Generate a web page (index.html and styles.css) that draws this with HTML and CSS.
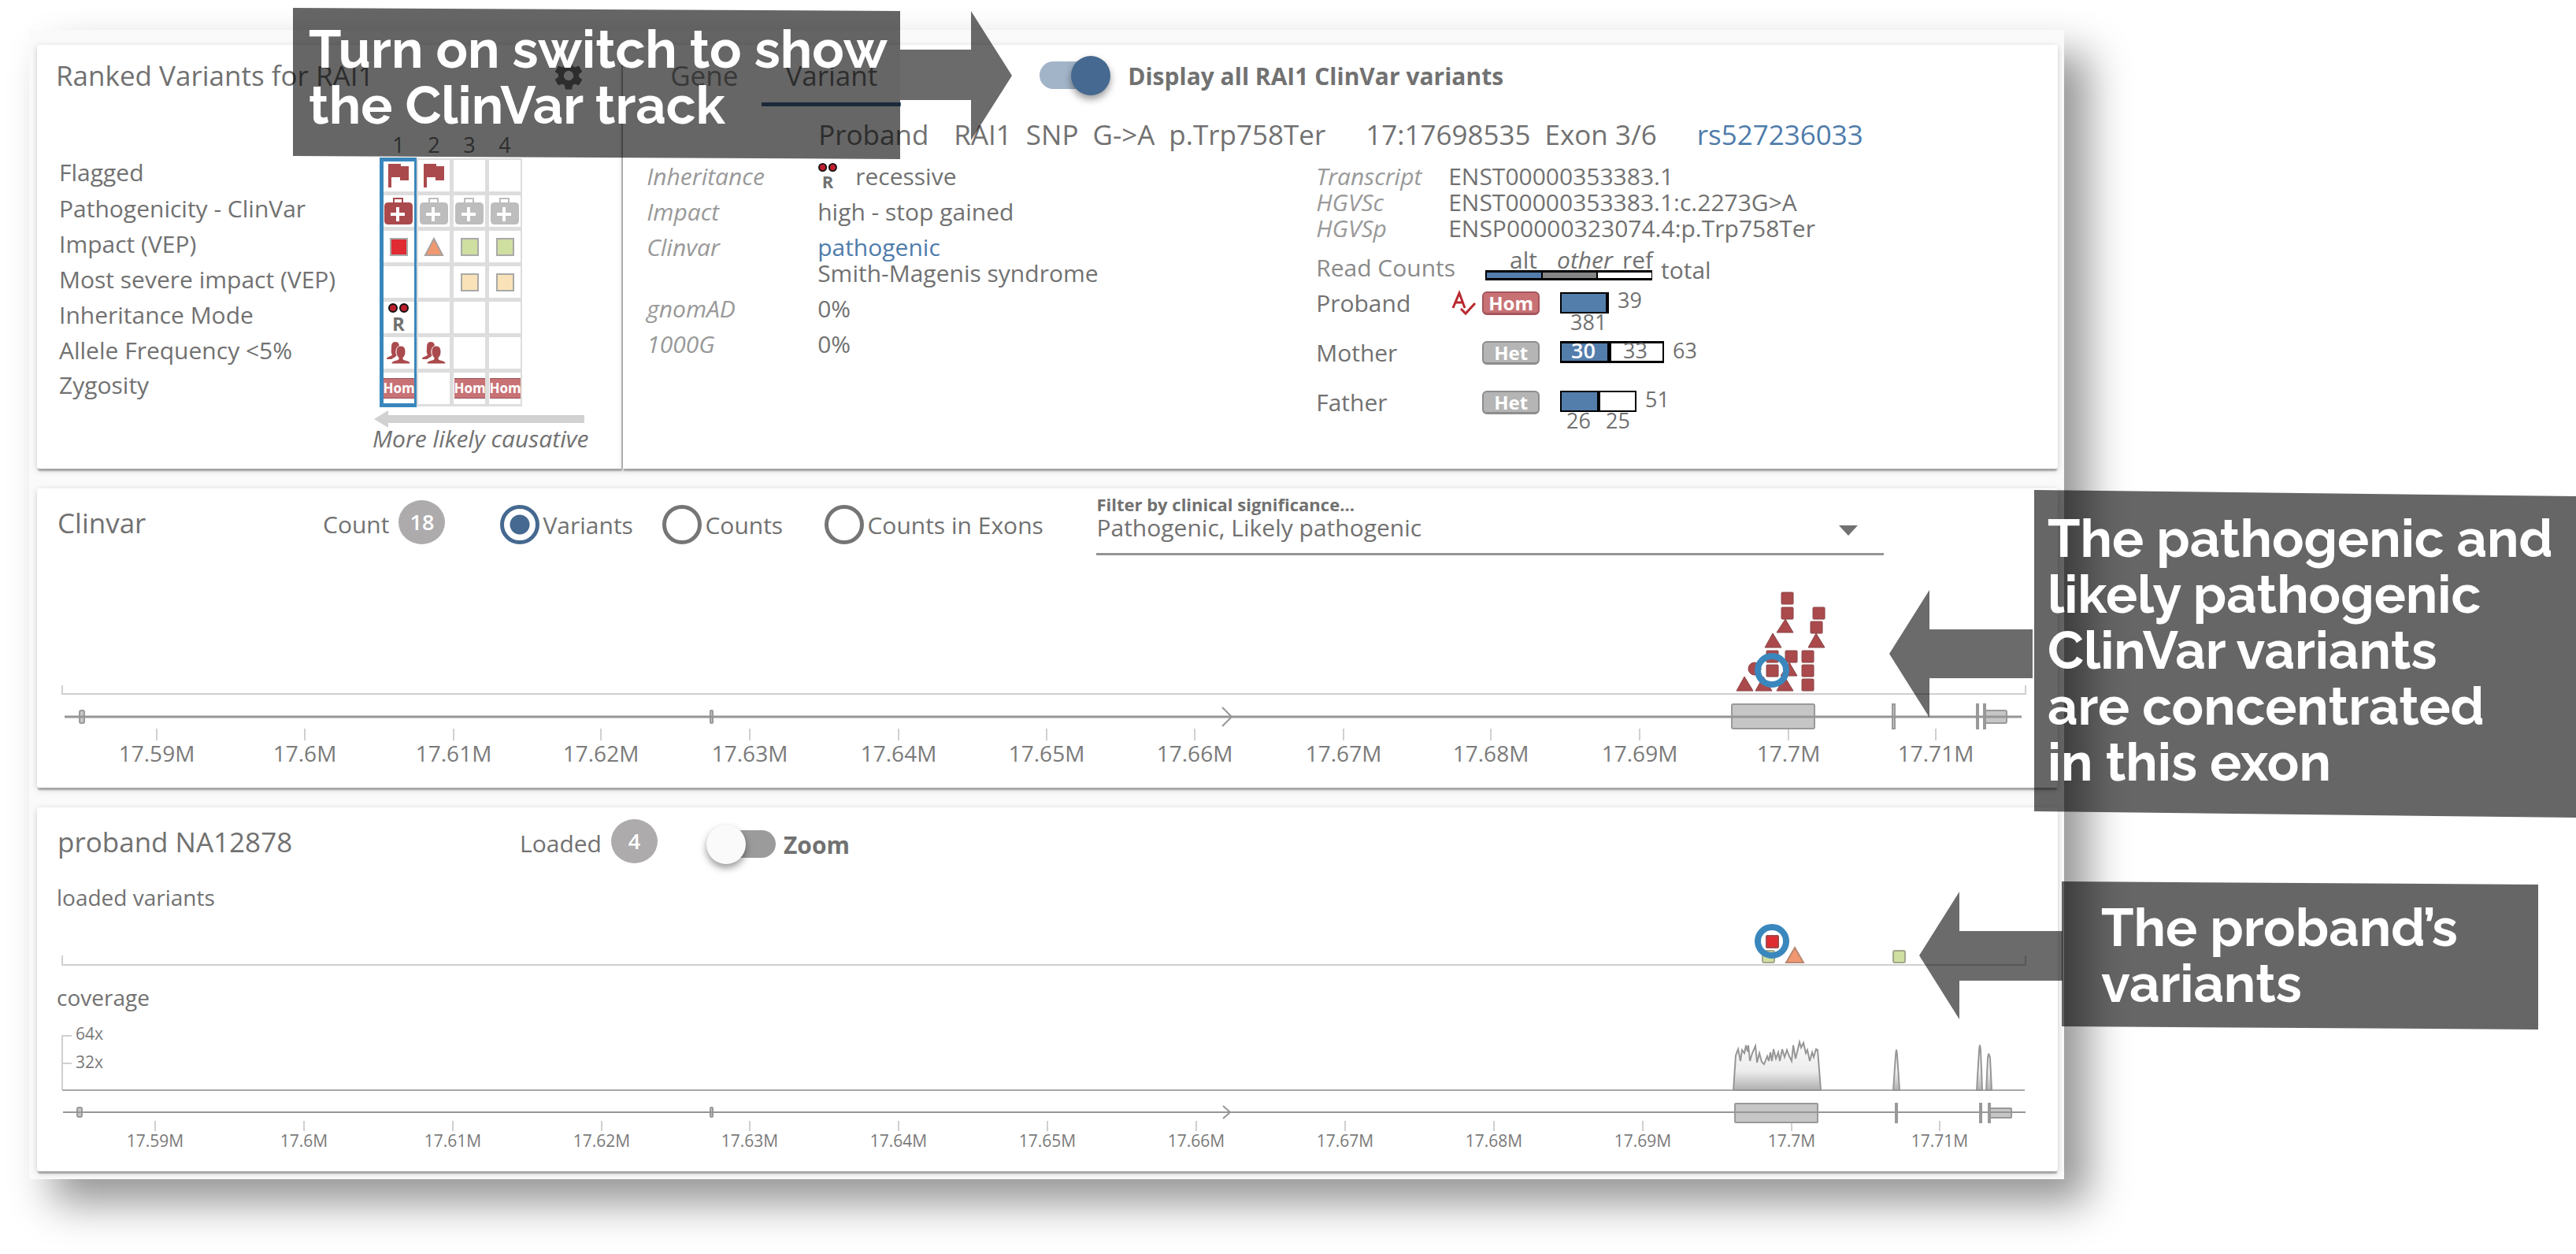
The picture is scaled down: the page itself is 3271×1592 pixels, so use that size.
FILE: index.html
```html
<!DOCTYPE html>
<html lang="en">
<head>
<meta charset="utf-8">
<title>RAI1 variant review</title>
<link rel="stylesheet" href="styles.css">
</head>
<body>
<svg class="defs" aria-hidden="true">
  <defs>
    <symbol id="flag" viewBox="0 0 26 30"><path d="M0 0h16v3h10v18H15v-4H4v13H0z"/></symbol>
    <symbol id="medkit" viewBox="0 0 36 34"><path d="M5 6h26q5 0 5 5v18q0 5-5 5H5q-5 0-5-5V11q0-5 5-5z"/><path d="M12 7V1h11v6" fill="none" stroke="currentColor" stroke-width="2"/><path d="M15 12h4v7h7v4h-7v7h-4v-7H8v-4h7z" fill="#fff"/></symbol>
    <symbol id="people" viewBox="0 0 30 28"><path d="M11 0c4 0 5 3 5 6-5 2-5 8-3 11l-2 2-5 3H0c0-4 6-3 7-6-2-3-1-5-1-9 0-4 1-7 5-7z"/><path d="M18 5c4 0 6 3 6 8 0 3-1 5-3 7v2c2 2 9 1 9 6H6c0-5 7-4 9-6v-2c-2-2-3-4-3-7 0-5 2-8 6-8z" stroke="#fff" stroke-width="1"/></symbol>
    <symbol id="recessive" viewBox="0 0 26 36"><g fill="#be1e2d" stroke="#111" stroke-width="2"><circle cx="6" cy="6" r="5"/><circle cx="20" cy="6" r="5"/></g><text x="13" y="35" text-anchor="middle" class="r-letter">R</text></symbol>
    <linearGradient id="depth" x1="0" y1="0" x2="0" y2="1"><stop offset="0" stop-color="#fafafa"/><stop offset=".6" stop-color="#ededed"/><stop offset="1" stop-color="#b0b0b0"/></linearGradient>
  </defs>
</svg>

<main class="app">
  <div class="top-row">
    <section class="card ranked">
      <header class="ranked-head">
        <h2 class="title">Ranked Variants for RAI1</h2>
        <button class="gear" type="button" aria-label="Settings"><svg viewBox="0 0 24 24"><path d="M19.43 12.98c.04-.32.07-.64.07-.98s-.03-.66-.07-.98l2.11-1.65c.19-.15.24-.42.12-.64l-2-3.46c-.12-.22-.39-.3-.61-.22l-2.49 1c-.52-.4-1.08-.73-1.69-.98l-.38-2.65C14.46 2.18 14.25 2 14 2h-4c-.25 0-.46.18-.49.42l-.38 2.65c-.61.25-1.17.59-1.69.98l-2.49-1c-.23-.09-.49 0-.61.22l-2 3.46c-.13.22-.07.49.12.64l2.11 1.65c-.04.32-.07.65-.07.98s.03.66.07.98l-2.11 1.65c-.19.15-.24.42-.12.64l2 3.46c.12.22.39.3.61.22l2.49-1c.52.4 1.08.73 1.69.98l.38 2.65c.03.24.24.42.49.42h4c.25 0 .46-.18.49-.42l.38-2.65c.61-.25 1.17-.59 1.69-.98l2.49 1c.23.09.49 0 .61-.22l2-3.46c.12-.22.07-.49-.12-.64l-2.11-1.65zM12 15.5c-1.93 0-3.5-1.57-3.5-3.5s1.57-3.500 3.500-3.500 3.500 1.570 3.500 3.500-1.570 3.500-3.500 3.500z"/></svg></button>
      </header>
      <div class="matrix-wrap">
        <table class="matrix">
          <thead><tr><td class="corner"></td><th>1</th><th>2</th><th>3</th><th>4</th></tr></thead>
          <tbody>
            <tr><th>Flagged</th><td><svg class="i-flag"><use href="#flag"/></svg></td><td><svg class="i-flag"><use href="#flag"/></svg></td><td></td><td></td></tr>
            <tr><th>Pathogenicity - ClinVar</th><td><svg class="i-kit"><use href="#medkit"/></svg></td><td><svg class="i-kit muted"><use href="#medkit"/></svg></td><td><svg class="i-kit muted"><use href="#medkit"/></svg></td><td><svg class="i-kit muted"><use href="#medkit"/></svg></td></tr>
            <tr><th>Impact (VEP)</th><td><i class="sq red"></i></td><td><svg class="i-tri" viewBox="0 0 26 24"><path d="M13 2l11 21H2z"/></svg></td><td><i class="sq green"></i></td><td><i class="sq green"></i></td></tr>
            <tr><th>Most severe impact (VEP)</th><td></td><td></td><td><i class="sq sand"></i></td><td><i class="sq sand"></i></td></tr>
            <tr><th>Inheritance Mode</th><td><svg class="i-rec"><use href="#recessive"/></svg></td><td></td><td></td><td></td></tr>
            <tr><th>Allele Frequency &lt;5%</th><td><svg class="i-people"><use href="#people"/></svg></td><td><svg class="i-people"><use href="#people"/></svg></td><td></td><td></td></tr>
            <tr><th>Zygosity</th><td><span class="hom">Hom</span></td><td></td><td><span class="hom">Hom</span></td><td><span class="hom">Hom</span></td></tr>
          </tbody>
        </table>
        <div class="selected-col"></div>
      </div>
      <div class="causative">
        <svg viewBox="0 0 268 22"><path d="M0 11L18 0v6h249v10H18v6z"/></svg>
        <em>More likely causative</em>
      </div>
    </section>

    <section class="card detail">
      <header class="detail-head">
        <nav class="tabs"><button type="button" class="tab">Gene</button><button type="button" class="tab active">Variant</button></nav>
        <label class="toggle all-variants"><input type="checkbox" class="switch" checked>Display all RAI1 ClinVar variants</label>
      </header>
      <p class="headline"><span class="who">Proband</span><span>RAI1</span><span>SNP</span><span>G-&gt;A</span><span>p.Trp758Ter</span><span class="apart">17:17698535</span><span>Exon 3/6</span><a class="apart" href="#rs527236033">rs527236033</a></p>
      <div class="facts">
        <dl class="annot">
          <dt>Inheritance</dt><dd class="with-icon"><svg class="i-rec"><use href="#recessive"/></svg>recessive</dd>
          <dt>Impact</dt><dd>high - stop gained</dd>
          <dt>Clinvar</dt><dd><a href="#clinvar">pathogenic</a><br>Smith-Magenis syndrome</dd>
          <dt>gnomAD</dt><dd>0%</dd>
          <dt>1000G</dt><dd>0%</dd>
        </dl>
        <div class="right-facts">
          <dl class="hgvs">
            <dt>Transcript</dt><dd>ENST00000353383.1</dd>
            <dt>HGVSc</dt><dd>ENST00000353383.1:c.2273G&gt;A</dd>
            <dt>HGVSp</dt><dd>ENSP00000323074.4:p.Trp758Ter</dd>
          </dl>
          <div class="reads legend">
            <span class="reads-label">Read Counts</span>
            <svg viewBox="0 0 300 47"><rect x="4" y="37" width="212" height="13"/><rect x="6" y="40" width="69" height="7" class="alt"/><rect x="77" y="40" width="68" height="7" class="other"/><rect x="147" y="40" width="68" height="7" class="ref"/><text x="35" y="35" class="big">alt</text><text x="95" y="35" class="big it">other</text><text x="178" y="35" class="big">ref</text><text x="227" y="48" class="big">total</text></svg>
          </div>
          <div class="reads">
            <span>Proband</span>
            <svg class="i-check" viewBox="0 0 30 28"><path d="M1 20L9 1l7 19M4 13h10M11 21l6 6L29 14" /></svg>
            <span class="zyg hom-z">Hom</span>
            <svg class="bar" viewBox="0 0 260 63"><rect y="18" width="62" height="27"/><rect x="2" y="20" width="56" height="23" class="alt"/><text x="73" y="38">39</text><text x="13" y="66">381</text></svg>
          </div>
          <div class="reads">
            <span>Mother</span><i></i>
            <span class="zyg">Het</span>
            <svg class="bar" viewBox="0 0 260 63"><rect y="17" width="132" height="28"/><rect x="2" y="20" width="58" height="22" class="alt"/><rect x="65" y="20" width="65" height="22" class="ref"/><text x="14" y="39" class="on">30</text><text x="80" y="39">33</text><text x="143" y="39">63</text></svg>
          </div>
          <div class="reads">
            <span>Father</span><i></i>
            <span class="zyg">Het</span>
            <svg class="bar" viewBox="0 0 260 63"><rect y="17" width="97" height="27"/><rect x="2" y="19" width="45" height="23" class="alt"/><rect x="51" y="19" width="44" height="23" class="ref"/><text x="108" y="38">51</text><text x="8" y="65">26</text><text x="58" y="65">25</text></svg>
          </div>
        </div>
      </div>
    </section>
  </div>

  <section class="card clinvar">
    <header class="track-head">
      <h2 class="title track-name">Clinvar</h2>
      <span class="counter">Count <b class="badge">18</b></span>
      <div class="radios">
        <label><input type="radio" name="view" checked>Variants</label>
        <label><input type="radio" name="view">Counts</label>
        <label><input type="radio" name="view">Counts in Exons</label>
      </div>
      <div class="field">
        <label for="sig">Filter by clinical significance...</label>
        <select id="sig"><option>Pathogenic, Likely pathogenic</option></select>
        <svg class="caret" viewBox="0 0 24 13"><path d="M0 0h24L12 13z"/></svg>
      </div>
    </header>
    <svg class="plot" viewBox="47 710 2566 275">
      <path class="brush" d="M79 870v11h2493v-11"/>
      <path class="ticks" d="M199 925v15M387 925v15M576 925v15M763 925v15M952 925v15M1141 925v15M1329 925v15M1517 925v15M1706 925v15M1893 925v15M2082 925v15M2271 925v15M2458 925v15"/>
      <g class="exons"><rect x="101" y="902" width="6" height="16" rx="2"/><rect x="902" y="902" width="3" height="16" rx="1"/><rect x="2199" y="894" width="105" height="31" rx="2"/><rect x="2403" y="894" width="3" height="31"/><rect x="2510" y="894" width="2" height="31"/><rect x="2519" y="894" width="2" height="31"/><rect x="2521" y="902" width="27" height="16" rx="2"/></g>
      <path class="gene" d="M82 910H2567"/><path class="strand" d="M1552 898l12 12-12 12"/>
      <g class="labels"><text x="199" y="967">17.59M</text><text x="387" y="967">17.6M</text><text x="576" y="967">17.61M</text><text x="763" y="967">17.62M</text><text x="952" y="967">17.63M</text><text x="1141" y="967">17.64M</text><text x="1329" y="967">17.65M</text><text x="1517" y="967">17.66M</text><text x="1706" y="967">17.67M</text><text x="1893" y="967">17.68M</text><text x="2082" y="967">17.69M</text><text x="2271" y="967">17.7M</text><text x="2458" y="967">17.71M</text></g>
      <g class="marks">
        <rect x="2262" y="752" width="15" height="15" rx="1"/><rect x="2262" y="771" width="15" height="15" rx="1"/><rect x="2302" y="771" width="15" height="15" rx="1"/><rect x="2299" y="789" width="15" height="15" rx="1"/>
        <path d="M2267 786l10 17h-21zM2251 804l11 18h-21zM2306 804l11 18h-21zM2272 841l10 17h-21z"/>
        <path d="M2215 859l11 18h-21zM2239 859l11 18h-21zM2266 859l11 18h-21z"/>
        <rect x="2243" y="826" width="15" height="15" rx="1"/><rect x="2267" y="826" width="15" height="15" rx="1"/><rect x="2288" y="826" width="15" height="15" rx="1"/><rect x="2288" y="844" width="15" height="15" rx="1"/><rect x="2288" y="862" width="15" height="15" rx="1"/>
        <circle cx="2228" cy="849" r="8"/><rect x="2243" y="844" width="15" height="15" rx="1"/>
      </g>
      <circle class="ring" cx="2250" cy="851" r="18"/>
    </svg>
  </section>

  <section class="card proband">
    <header class="track-head">
      <h2 class="title track-name wide">proband NA12878</h2>
      <span class="counter">Loaded <b class="badge">4</b></span>
      <label class="toggle zoom"><input type="checkbox" class="switch">Zoom</label>
    </header>
    <h3 class="sub">loaded variants</h3>
    <svg class="plot" viewBox="47 1155 2566 95">
      <path class="brush" d="M79 1213v12h2493v-12"/>
      <g class="calls"><rect x="2238" y="1207" width="15" height="15" rx="2" class="green"/><rect x="2404" y="1207" width="15" height="15" rx="2" class="green"/><path d="M2279 1203l11 19h-22z" class="orange"/><rect x="2243" y="1188" width="15" height="15" rx="1" class="red"/></g>
      <circle class="ring" cx="2250" cy="1195" r="18"/>
    </svg>
    <h3 class="sub">coverage</h3>
    <svg class="plot" viewBox="47 1282 2566 193">
      <path class="brush" d="M91 1315H79v69M79 1350h12"/>
      <text x="96" y="1320" class="small">64x</text><text x="96" y="1356" class="small">32x</text>
      <path class="base" d="M79 1384H2571"/>
      <g class="depth"><path d="M2201 1384L2204 1340 2207 1332 2210 1347 2212 1333 2215 1337 2217 1327 2219 1335 2220 1327 2222 1347 2225 1337 2229 1328 2231 1349 2234 1337 2237 1348 2240 1351 2244 1341 2246 1347 2248 1336 2250 1347 2252 1332 2255 1344 2258 1336 2260 1347 2263 1332 2266 1342 2269 1333 2272 1341 2275 1347 2277 1327 2280 1344 2285 1323 2287 1330 2290 1324 2293 1337 2295 1333 2298 1347 2301 1336 2303 1342 2306 1332 2308 1333 2312 1384z"/><path d="M2404 1384l3-44q1-14 2 0l3 44zM2510 1384l3-50q1-14 2 0l2 50zM2522 1384l2-40q1-12 3 0l2 40z"/></g>
      <path class="ticks" d="M197 1423v13M386 1423v13M575 1423v13M764 1423v13M952 1423v13M1141 1423v13M1330 1423v13M1519 1423v13M1708 1423v13M1897 1423v13M2086 1423v13M2275 1423v13M2463 1423v13"/>
      <g class="exons"><rect x="98" y="1406" width="6" height="12" rx="2"/><rect x="902" y="1406" width="3" height="12" rx="1"/><rect x="2203" y="1401" width="105" height="24" rx="1"/><rect x="2407" y="1401" width="2" height="24"/><rect x="2514" y="1401" width="2" height="24"/><rect x="2525" y="1401" width="2" height="24"/><rect x="2527" y="1407" width="27" height="12" rx="1"/></g>
      <path class="gene thin" d="M80 1412H2572"/><path class="strand" d="M1553 1404l9 8-9 8"/>
      <g class="labels small"><text x="197" y="1456">17.59M</text><text x="386" y="1456">17.6M</text><text x="575" y="1456">17.61M</text><text x="764" y="1456">17.62M</text><text x="952" y="1456">17.63M</text><text x="1141" y="1456">17.64M</text><text x="1330" y="1456">17.65M</text><text x="1519" y="1456">17.66M</text><text x="1708" y="1456">17.67M</text><text x="1897" y="1456">17.68M</text><text x="2086" y="1456">17.69M</text><text x="2275" y="1456">17.7M</text><text x="2463" y="1456">17.71M</text></g>
    </svg>
  </section>
</main>

<aside class="note note-switch"><p>Turn on switch to show<br>the ClinVar track</p></aside>
<svg class="arrow arrow-switch" viewBox="0 0 142 164"><path d="M0 49h90V0l52 82-52 82v-51H0z"/></svg>
<aside class="note note-exon"><p>The pathogenic and<br>likely pathogenic<br>ClinVar variants<br>are concentrated<br>in this exon</p></aside>
<svg class="arrow arrow-exon" viewBox="0 0 182 162"><path d="M182 50H51V0L0 81l51 81v-50h131z"/></svg>
<aside class="note note-proband"><p>The proband’s<br>variants</p></aside>
<svg class="arrow arrow-proband" viewBox="0 0 182 162"><path d="M182 50H51V0L0 81l51 81v-49h131z"/></svg>
</body>
</html>
```
FILE: styles.css
```css
* { box-sizing: border-box; }
body { display: flow-root; margin: 0; position: relative; min-height: 100vh; overflow-x: hidden; background: #fff; color: #717171; font: 30px/33px "Open Sans", "Noto Sans", sans-serif; }
h2, h3, p, dl, dd { margin: 0; }
button { font: inherit; color: inherit; background: none; border: 0; padding: 0; }
a { color: #4f7cab; text-decoration: none; }
svg { display: block; overflow: visible; }
.defs { position: absolute; width: 0; height: 0; }

.app { width: 79%; margin: 38px 0 0 37px; padding: 19px 8px 10px 10px; display: flex; flex-direction: column; gap: 25px; background: #fafafa; box-shadow: 30px 30px 50px rgba(0, 0, 0, .42); }
.card { background: #fff; border-radius: 3px; box-shadow: 0 4px 2px -1px rgba(0, 0, 0, .28), 0 2px 8px rgba(0, 0, 0, .18); }
.title { font-size: 35px; line-height: 50px; font-weight: 400; }

/* ranked variants */
.top-row { display: flex; }
.ranked { flex: 0 0 29%; padding: 14px 40px 24px 24px; border-right: 2px solid #bdbdbd; border-radius: 3px 0 0 3px; }
.ranked-head { display: flex; justify-content: space-between; align-items: center; }
.gear { width: 42px; height: 42px; margin-right: 6px; fill: #717171; }
.matrix-wrap { position: relative; margin-top: 46px; }
.matrix { border-spacing: 0; }
.matrix td, .matrix th { padding: 0; font-weight: 400; }
.corner { width: 415px; }
.matrix thead th { width: 45px; height: 34px; padding-right: 5px; font-size: 27px; line-height: 34px; }
.matrix thead th:last-child { width: 42px; padding-right: 2px; }
.matrix tbody th { padding: 0 0 12px 4px; line-height: 31px; text-align: left; }
.matrix tbody td { width: 45px; height: 45px; border: solid #ddd; border-width: 0 5px 5px 0; }
.matrix tbody td:last-child { border-right-width: 2px; width: 42px; }
.matrix tbody tr:first-child td { border-top-width: 2px; height: 47px; }
.matrix tbody tr:last-child td { border-bottom-width: 3px; height: 43px; }
.matrix svg, .sq { margin: 0 auto; }
.matrix svg { fill: #aa4a4d; color: #aa4a4d; }
.selected-col { position: absolute; left: 411px; top: 33px; width: 47px; height: 317px; border: 5px solid #3a87bd; border-right-width: 3px; }
.matrix .i-flag { width: 26px; height: 30px; }
.matrix .i-kit { width: 36px; height: 34px; }
.matrix .muted { fill: #bdbdbd; color: #bdbdbd; }
.i-people { width: 30px; height: 28px; }
.i-rec { width: 26px; height: 36px; }
.r-letter { font: bold 24px "Open Sans", sans-serif; fill: #717171; }
.i-tri { width: 26px; height: 24px; }
.matrix .i-tri { fill: #f19871; stroke: #a8a09c; stroke-width: 2px; }
.sq { display: block; width: 23px; height: 23px; border: 2px solid #a9a9a9; }
.sq.red { background: #df2b31; }
.sq.green { background: #cfdf9f; }
.sq.sand { background: #f9e2b7; }
.hom { display: block; width: 39px; height: 26px; margin: 0 auto; background: #c87276; border: solid #96565a; border-width: 1px 0; color: #fff; font-weight: 700; font-size: 17px; line-height: 24px; text-align: center; }
.causative { width: 272px; margin: 5px 0 0 404px; white-space: nowrap; }
.causative svg { width: 268px; height: 22px; fill: #d1d1d1; }
.causative em { display: block; margin-left: -2px; line-height: 28px; }

/* variant detail */
.detail { flex: 1; border-radius: 0 3px 3px 0; padding: 14px 24px 0 30px; }
.detail-head { display: flex; align-items: flex-start; }
.tabs { display: flex; }
.tab { padding: 0 30px 9px; font-size: 35px; line-height: 50px; border-bottom: 5px solid transparent; color: #8f8f8f; }
.tab.active { color: #717171; border-color: #456990; }
.toggle { display: flex; align-items: center; font-weight: 700; }
.all-variants { margin-left: 176px; gap: 22px; }
.switch { appearance: none; position: relative; width: 90px; height: 50px; margin: 0; }
.switch::before { content: ""; position: absolute; left: 0; top: 7px; width: 80px; height: 35px; border-radius: 18px; background: #a2b4c8; }
.switch::after { content: ""; position: absolute; right: 0; top: 0; width: 50px; height: 50px; border-radius: 50%; background: #456990; box-shadow: 0 5px 10px rgba(0, 0, 0, .4); }
.switch:not(:checked)::before { left: 8px; background: #9b9b9b; }
.switch:not(:checked)::after { left: 0; background: #fafafa; }
.headline { display: flex; gap: 18px; margin: 11px 0 0 218px; font-size: 35px; line-height: 50px; white-space: pre; }
.headline .who { margin-right: 14px; }
.headline .apart { margin-left: 33px; }
.facts { display: grid; grid-template-columns: 850px 1fr; margin-top: 11px; }
dl { display: grid; align-content: start; }
dt { font-style: italic; color: #999; }
.annot { grid-template-columns: 217px 1fr; row-gap: 12px; }
.hgvs { grid-template-columns: 168px 1fr; }
.with-icon { display: flex; gap: 22px; }
.with-icon .i-rec { height: 33px; }
.reads { display: grid; grid-template-columns: 173px 38px 99px 260px; align-items: center; height: 63px; }
.reads.legend { grid-template-columns: 211px 300px; height: 47px; align-items: end; }
.reads-label { line-height: 26px; color: #8a8a8a; }
.reads text { font-size: 27px; fill: #717171; }
.reads text.big { font-size: 30px; }
.reads text.it { font-style: italic; }
.reads text.on { fill: #fff; font-weight: 600; }
.alt { fill: #537dab; }
.other { fill: #858585; }
.ref { fill: #fff; }
.i-check { width: 30px; height: 28px; fill: none; stroke: #b8292f; stroke-width: 3px; }
.zyg { width: 73px; height: 30px; border: 2px solid #8d8d8d; border-bottom-width: 3px; border-radius: 6px; background: #b5b5b5; color: #fff; font-size: 24px; font-weight: 700; line-height: 26px; text-align: center; }
.hom-z { background: #c87276; border-color: #a4555a; }

/* tracks */
.clinvar { padding-bottom: 15px; }
.proband { padding-bottom: 12px; }
.track-head { display: flex; align-items: center; height: 90px; padding-left: 26px; }
.track-name { flex: 0 0 337px; padding-bottom: 2px; }
.track-name.wide { flex-basis: 587px; }
.counter { display: flex; align-items: center; gap: 12px; }
.badge { width: 59px; height: 56px; margin-bottom: 4px; border-radius: 50%; background: #adabac; color: #fff; font-size: 27px; line-height: 56px; font-weight: 600; text-align: center; }
.radios { display: grid; grid-template-columns: 206px 206px 345px; margin: 2px 0 0 70px; }
.radios label { display: flex; align-items: center; gap: 4px; }
.radios input { appearance: none; width: 50px; height: 50px; margin: 0; border: 5px solid #757575; border-radius: 50%; }
.radios input:checked { border-color: #456990; background: radial-gradient(circle, #456990 12px, transparent 13px); }
.field { position: relative; align-self: flex-start; flex: 0 0 1000px; margin-top: 7px; }
.field label { display: block; margin-bottom: -10px; font-size: 22px; line-height: 26px; font-weight: 700; }
.field select { appearance: none; display: block; width: 100%; height: 62px; padding: 0 0 5px; border: 0; border-bottom: 3px solid #949494; border-radius: 0; background: none; color: inherit; font: inherit; line-height: 44px; }
.caret { position: absolute; right: 33px; top: 40px; width: 24px; height: 13px; fill: #717171; pointer-events: none; }
.zoom { margin: 4px 0 0 62px; gap: 8px; }
.plot { width: 100%; height: auto; }
.brush { fill: none; stroke: #d0d0d0; stroke-width: 2px; }
.ticks { stroke: #d0d0d0; stroke-width: 2px; }
.exons { fill: #c6c6c6; stroke: #999; stroke-width: 2px; }
.gene { stroke: #969696; stroke-width: 3px; }
.gene.thin { stroke-width: 2px; }
.strand { fill: none; stroke: #969696; stroke-width: 2px; }
.labels { font-size: 28px; text-anchor: middle; fill: #7a7a7a; }
.small { font-size: 21px; fill: #7a7a7a; }
.marks { fill: #aa4a4d; stroke: #8a4547; stroke-width: 1px; }
.ring { fill: none; stroke: #3a87bd; stroke-width: 8px; }
.sub { margin: 8px 0 0 25px; font-size: 28px; line-height: 32px; font-weight: 400; }
.plot + .sub { margin-top: 0; }
.calls { stroke: #a3a78c; stroke-width: 2px; }
.calls .green { fill: #cfdf9f; }
.calls .orange { fill: #f19871; stroke: #b98872; }
.calls .red { fill: #df2b31; stroke: #a5464a; }
.base { stroke: #a9a9a9; stroke-width: 2px; }
.depth { fill: url(#depth); stroke: #969696; stroke-width: 2px; }

/* annotations laid over the app */
.note { position: absolute; background: rgba(0, 0, 0, .6); color: #fff; font: 700 67px/71px Raleway, Lato, sans-serif; white-space: nowrap; }
.note-switch { left: 372px; top: 10px; width: 771px; height: 192px; padding: 17px 20px; clip-path: polygon(0 0, 100% 4px, 100% 100%, 0 188px); }
.note-exon { left: 2583px; right: 0; top: 622px; height: 416px; padding: 26px 17px; clip-path: polygon(0 0, 100% 8px, 100% 100%, 0 408px); }
.note-proband { left: 2618px; top: 1119px; width: 605px; height: 188px; padding: 23px 50px; clip-path: polygon(0 0, 100% 4px, 100% 100%, 0 184px); }
.arrow { position: absolute; fill: rgba(0, 0, 0, .58); }
.arrow-switch { left: 1143px; top: 14px; width: 142px; height: 164px; }
.arrow-exon { left: 2399px; top: 749px; width: 182px; height: 162px; }
.arrow-proband { left: 2437px; top: 1132px; width: 182px; height: 162px; }
```
